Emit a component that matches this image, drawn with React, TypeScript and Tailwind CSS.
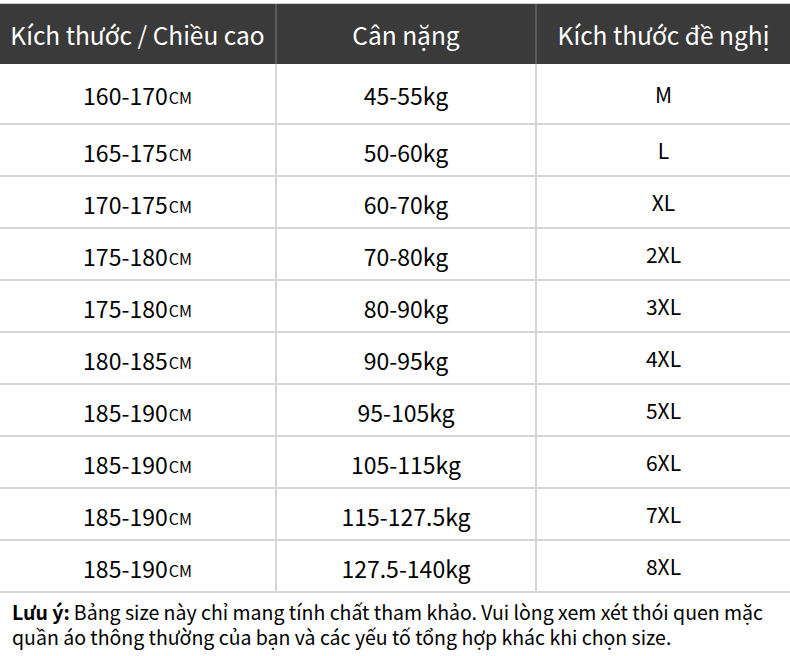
import React from "react";

const rows = [
  { h: "160-170", w: "45-55kg", s: "M" },
  { h: "165-175", w: "50-60kg", s: "L" },
  { h: "170-175", w: "60-70kg", s: "XL" },
  { h: "175-180", w: "70-80kg", s: "2XL" },
  { h: "175-180", w: "80-90kg", s: "3XL" },
  { h: "180-185", w: "90-95kg", s: "4XL" },
  { h: "185-190", w: "95-105kg", s: "5XL" },
  { h: "185-190", w: "105-115kg", s: "6XL" },
  { h: "185-190", w: "115-127.5kg", s: "7XL" },
  { h: "185-190", w: "127.5-140kg", s: "8XL" },
];

export default function App() {
  return (
    <div
      className="w-[790px] h-[656px] bg-white text-black overflow-hidden pt-[3px]"
      style={{ fontFamily: '"Noto Sans CJK SC", "Noto Sans", sans-serif' }}
    >
      {/* bảng size */}
      <div className="border-t border-[#cfcfcf]">
        <div className="grid grid-cols-[275px_260px_255px] h-[60px] bg-[#3a3a3a] text-white text-[24.5px]">
          <div className="flex items-center justify-center pt-[2px]">Kích thước / Chiều cao</div>
          <div className="flex items-center justify-center pt-[2px] border-l-2 border-[#5a5a5a]">Cân nặng</div>
          <div className="flex items-center justify-center pt-[2px] border-l-2 border-[#5a5a5a]">Kích thước đề nghị</div>
        </div>

        {rows.map((r, i) => (
          <div
            key={i}
            className={`grid grid-cols-[275px_260px_255px] border-b-2 border-[#d6d6d6] ${
              i === 0 ? "h-[61px]" : "h-[52px]"
            }`}
          >
            <div className="flex items-center justify-center text-[23px] pt-[4px]">
              {r.h}
              <span className="text-[16px] ml-[1px] mt-[3px]">CM</span>
            </div>
            <div className="flex items-center justify-center text-[23px] pt-[4px] border-l-2 border-[#d6d6d6]">
              {r.w}
            </div>
            <div className="flex items-center justify-center text-[21px] pt-[2px] border-l-2 border-[#d6d6d6]">
              {r.s}
            </div>
          </div>
        ))}
      </div>

      <p className="px-[12px] pt-[6px] text-[19.5px] leading-[25px]">
        <b className="mr-[4px]">Lưu ý:</b>Bảng size này chỉ mang tính chất tham khảo. Vui lòng xem xét thói quen mặc
        quần áo thông thường của bạn và các yếu tố tổng hợp khác khi chọn size.
      </p>
    </div>
  );
}
